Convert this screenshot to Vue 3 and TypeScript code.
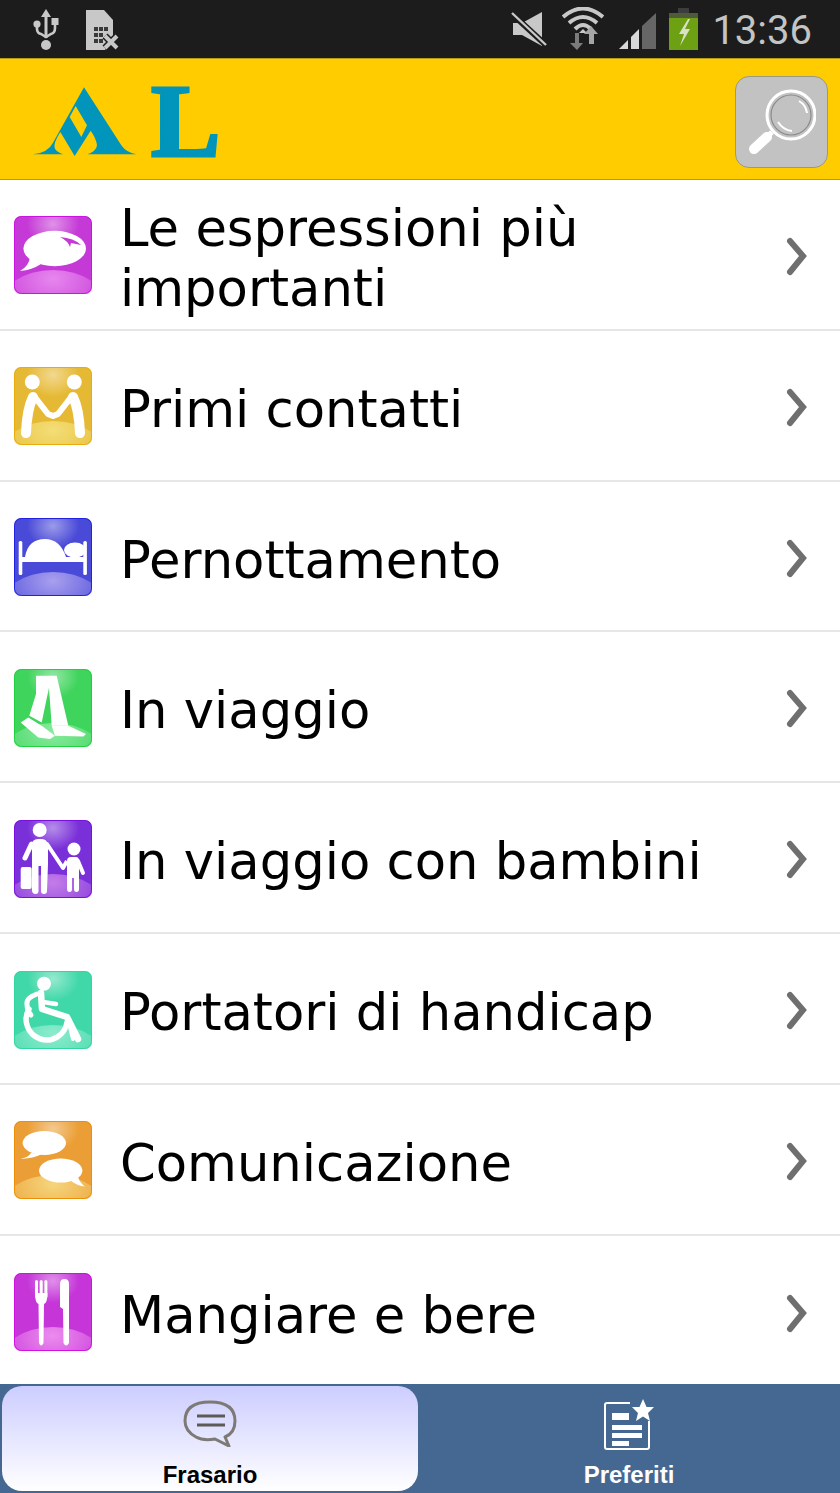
<script setup lang="ts">
interface Topic {
  label: string
  glyph: string
  base: string
  edge: string
  dome: string
}

const topics: Topic[] = [
  { label: 'Le espressioni più importanti', glyph: 'bubble', base: '#c53ad6', edge: '#cc14e2', dome: '#e98af0' },
  { label: 'Primi contatti', glyph: 'hands', base: '#e6b935', edge: '#e8ad0c', dome: '#f4e07a' },
  { label: 'Pernottamento', glyph: 'bed', base: '#4a4ad8', edge: '#2222e0', dome: '#aea4f0' },
  { label: 'In viaggio', glyph: 'legs', base: '#3fd45c', edge: '#20d040', dome: '#8cecA2' },
  { label: 'In viaggio con bambini', glyph: 'family', base: '#7a30d8', edge: '#7a10e0', dome: '#c880ea' },
  { label: 'Portatori di handicap', glyph: 'wheel', base: '#40d8a8', edge: '#30d8a0', dome: '#90ecd0' },
  { label: 'Comunicazione', glyph: 'talk', base: '#eb9e35', edge: '#eb8e08', dome: '#f6d880' },
  { label: 'Mangiare e bere', glyph: 'food', base: '#c535d8', edge: '#d010e0', dome: '#ee90f0' },
]
</script>

<template>
  <div class="phone">
    <div class="status">
      <svg class="st-usb" width="26" height="42" viewBox="0 0 26 42">
        <path d="M13 0l5 8h-3.5v21h-3V8H8z" fill="#c8c8c8" />
        <circle cx="13" cy="36" r="5" fill="#c8c8c8" />
        <path d="M4 14v6q0 4 4 5l5 3 5-3q4-1 4-6v-5" fill="none" stroke="#c8c8c8" stroke-width="2.6" />
        <circle cx="4" cy="15" r="3.6" fill="#c8c8c8" />
        <rect x="18.500" y="9" width="7" height="7" fill="#c8c8c8" />
      </svg>
      <svg class="st-sim" width="34" height="42" viewBox="0 0 34 42">
        <path d="M0 0h18l9 10v17l-8 13H0z" fill="#c8c8c8" />
        <g fill="#3a3a3a">
          <rect x="8" y="17" width="4" height="4" /><rect x="13" y="17" width="4" height="4" /><rect x="18" y="17" width="4" height="4" />
          <rect x="8" y="23" width="4" height="4" /><rect x="13" y="23" width="4" height="4" />
          <rect x="8" y="29" width="4" height="4" /><rect x="13" y="29" width="4" height="4" />
        </g>
        <path d="M19 26l12 12M31 26L19 38" stroke="#1c1c1c" stroke-width="7" />
        <path d="M19 26l12 12M31 26L19 38" stroke="#c8c8c8" stroke-width="4" />
      </svg>
      <div class="st-space"></div>
      <svg class="st-mute" width="36" height="36" viewBox="0 0 36 36">
        <path d="M2 11h9L31 0v34L11 23H2z" fill="#c8c8c8" />
        <path d="M0 1l36 33" stroke="#1c1c1c" stroke-width="6" />
        <path d="M1 1l34 32" stroke="#c8c8c8" stroke-width="2.4" />
      </svg>
      <svg class="st-wifi" width="42" height="44" viewBox="0 0 42 44">
        <path d="M1 10Q21-7 41 10M7 16Q21 4 35 16M13 22Q21 14 29 22" fill="none" stroke="#c8c8c8" stroke-width="4" />
        <path d="M17 26l4-4 4 4z" fill="#c8c8c8" />
        <path d="M13 26v10h-5l7 7 6-7h-4V26z" fill="#7b7b7b" />
        <path d="M29 19l7 8h-4v10h-5V27h-5z" fill="#a5a5a5" />
      </svg>
      <svg class="st-signal" width="38" height="37" viewBox="0 0 38 37">
        <path d="M0 36L9 27v9z" fill="#d8d8d8" />
        <path d="M12 24l8-8v20h-8z" fill="#d8d8d8" />
        <path d="M23 13L37 0v36H23z" fill="#666" />
      </svg>
      <svg class="st-battery" width="29" height="42" viewBox="0 0 29 42">
        <rect x="9" y="0" width="11" height="6" fill="#3d3d3d" />
        <rect x="0" y="5" width="29" height="37" fill="#6ea014" />
        <rect x="0" y="5" width="29" height="5" fill="#4f5a3a" />
        <path d="M19 11l-9 15h5l-4 12 10-17h-5l5-10z" fill="#d8e0c8" />
      </svg>
      <span class="clock">13:36</span>
    </div>

    <header class="topbar">
      <div class="logo">
        <svg width="115" height="78" viewBox="0 0 345 234">
          <path fill="#0295bb" d="M168 16L280 190Q295 212 325 217L178 217Q205 208 207 190Q205 170 188 146L140 222L97 150Q75 185 80 198Q85 210 105 217L15 217Q60 212 75 182z" />
          <path fill="#ffcc00" d="M143 72L177 130L160 165L125 105z" />
        </svg>
        <span class="logo-l">L</span>
      </div>
      <button class="search">
        <svg width="70" height="72" viewBox="0 0 70 72">
          <circle cx="45" cy="29" r="24" fill="none" stroke="#fff" stroke-width="3" />
          <circle cx="45" cy="29" r="20" fill="none" stroke="#8a8a8a" stroke-width="1.200" />
          <path d="M53 15q7 4 8 12" fill="none" stroke="#fff" stroke-width="2" />
          <path d="M32 36q5 8 14 9" fill="none" stroke="#fff" stroke-width="2" />
          <path d="M26 46L22 50" stroke="#fff" stroke-width="5" />
          <path d="M21 51L8 63" stroke="#fff" stroke-width="10" stroke-linecap="round" />
        </svg>
      </button>
    </header>

    <ul class="topics">
      <li v-for="(t, i) in topics" :key="t.label" class="topic">
        <svg class="tile" width="78" height="78" viewBox="0 0 78 78">
          <defs>
            <clipPath :id="`tile-${i}`"><rect width="78" height="78" rx="7" /></clipPath>
            <radialGradient :id="`glow-${i}`">
              <stop offset="0" stop-color="#fff" stop-opacity=".45" />
              <stop offset="1" stop-color="#fff" stop-opacity="0" />
            </radialGradient>
            <radialGradient :id="`dome-${i}`" cx=".5" cy=".12" r=".55">
              <stop offset="0" :stop-color="t.dome" stop-opacity=".95" />
              <stop offset="1" :stop-color="t.dome" stop-opacity=".1" />
            </radialGradient>
          </defs>
          <g :clip-path="`url(#tile-${i})`">
            <rect width="78" height="78" :fill="t.base" />
            <ellipse cx="39" cy="8" rx="26" ry="22" :fill="`url(#glow-${i})`" />
            <ellipse cx="39" cy="91" rx="54" ry="37" :fill="`url(#dome-${i})`" />
            <rect x=".5" y=".5" width="77" height="77" rx="7" fill="none" :stroke="t.edge" />
          </g>

          <g v-if="t.glyph === 'bubble'" fill="#fff">
            <ellipse cx="40.700" cy="32.500" rx="31.300" ry="17.700" />
            <path d="M16 41Q15 50 6 55Q18 54 27 48z" />
            <path :fill="t.base" d="M46 21Q60 22 67 29L57 27L56 31Q54 25 46 21z" />
          </g>
          <g v-else-if="t.glyph === 'hands'" fill="none" stroke="#fff" stroke-linecap="round" stroke-linejoin="round">
            <circle cx="18.300" cy="15" r="7.500" fill="#fff" stroke="none" />
            <circle cx="60.300" cy="15" r="7.500" fill="#fff" stroke="none" />
            <path d="M12 66Q13 42 19 30" stroke-width="10" />
            <path d="M66 66Q65 42 59 30" stroke-width="10" />
            <path d="M20 29L34 47L39 49L44 47L58 29" stroke-width="6" />
          </g>
          <g v-else-if="t.glyph === 'bed'" fill="#fff">
            <rect x="4.700" y="23" width="3.600" height="34" rx="1.500" />
            <rect x="69.300" y="23" width="3.600" height="34" rx="1.500" />
            <path d="M8 39H70V44H8z" />
            <path d="M11 39Q14 21 31 21Q46 21 52 39z" />
            <ellipse cx="61" cy="32" rx="11" ry="7.500" />
          </g>
          <g v-else-if="t.glyph === 'legs'" fill="#fff">
            <path d="M22 6.700H42.700L54.300 56.700H37.700L35 18.400L27.700 53.400L15.300 46.700L22 25z" />
            <path d="M6.700 53.400L14.300 48.400L27.700 56.700L41 66.700L36 70L24.300 68.400L14.300 60z" />
            <path d="M37.700 56.700H54.300L72 65L69.300 67.400L41 66.700z" />
          </g>
          <g v-else-if="t.glyph === 'family'" fill="#fff">
            <circle cx="25.700" cy="10" r="7" />
            <path d="M18 25Q18 19 24 19H28Q33 19 34 25V44L33 71Q33 74 30 74T27 71V46H24.500V71Q24.500 74 21.500 74T18 71z" />
            <path d="M17.500 24L11 38" stroke="#fff" stroke-width="5" stroke-linecap="round" />
            <path d="M33 24L49 48" stroke="#fff" stroke-width="4" stroke-linecap="round" />
            <rect x="6.700" y="47" width="11" height="22" rx="2" />
            <circle cx="60" cy="29" r="6.500" />
            <path d="M53 41Q53 37 57 37H62Q65 37 65 41V69Q65 72 62.500 72T60 69V58H58V69Q58 72 55.500 72T53 69z" />
            <path d="M53 41L49 48" stroke="#fff" stroke-width="4" />
            <path d="M64 41L69 53" stroke="#fff" stroke-width="4" stroke-linecap="round" />
          </g>
          <g v-else-if="t.glyph === 'wheel'" fill="none" stroke="#fff" stroke-linecap="round" stroke-linejoin="round">
            <circle cx="30" cy="12.700" r="7" fill="#fff" stroke="none" />
            <path d="M15 38A20.500 20.500 0 1 0 53 51" stroke-width="5.500" />
            <path d="M27 22L28 38L53 46L64 68" stroke-width="6.500" />
            <path d="M54 48L59 68" stroke-width="4" />
            <path d="M23 23Q12 27 13 33Q13 40 17 44" stroke-width="5" />
            <path d="M29 31L42 33" stroke-width="4.500" />
          </g>
          <g v-else-if="t.glyph === 'talk'" fill="#fff">
            <ellipse cx="30.300" cy="22" rx="21.700" ry="12" />
            <path d="M17 32Q15 36 7 37.600Q18 38 28 33z" />
            <ellipse cx="46.700" cy="49.600" rx="21.700" ry="12" />
            <path d="M57 60Q64 65 71 65.600Q66 62 64 56z" />
          </g>
          <g v-else fill="#fff">
            <rect x="21" y="7" width="3" height="18" rx="1.500" />
            <rect x="25.700" y="7" width="3" height="18" rx="1.500" />
            <rect x="30.400" y="7" width="3" height="18" rx="1.500" />
            <path d="M21 20Q21 30 24.500 31L25 70Q27 75 29.500 70L30 31Q33.500 30 33.400 20z" />
            <path d="M46 34V11Q46 6 50.500 6Q55 6 55 11V70Q52 75 49.500 70L49 36z" />
          </g>
        </svg>
        <span class="topic-label">{{ t.label }}</span>
        <svg class="chevron" width="24" height="40" viewBox="0 0 24 40">
          <path d="M4 4L17 19L4 35" fill="none" stroke="#6f6f6f" stroke-width="6" stroke-linecap="round" />
        </svg>
      </li>
    </ul>

    <nav class="tabs">
      <div class="tab active">
        <svg width="54" height="48" viewBox="0 0 54 48">
          <path d="M13 38Q2 32 2 22Q2 3 27 3Q52 3 52 22Q52 34 42 38L46 47L32 40Q20 42 13 38z" fill="none" stroke="#7d7a75" stroke-width="3" stroke-linejoin="round" />
          <path d="M14 17H42M14 26H42" stroke="#5c5a56" stroke-width="3" />
        </svg>
        <span>Frasario</span>
      </div>
      <div class="tab">
        <svg width="52" height="52" viewBox="0 0 52 52">
          <path d="M27 4H4Q2 4 2 6V48Q2 50 4 50H44Q46 50 46 48V22" fill="none" stroke="#fff" stroke-width="2" />
          <path d="M40 0L43.500 8H51L45 14L47 22L40 17.500L33 22L35 14L29 8H36.500z" fill="#fff" />
          <path d="M9 14H26V21H9zM9 26H39V31H9zM9 34H39V39H9zM9 42H26V47H9z" fill="#fff" />
        </svg>
        <span>Preferiti</span>
      </div>
    </nav>
  </div>
</template>

<style scoped>
.phone {
  width: 840px;
  height: 1493px;
  display: flex;
  flex-direction: column;
  overflow: hidden;
  background: #fff;
  font-family: 'DejaVu Sans', sans-serif;
}

.status {
  height: 58px;
  flex: none;
  display: flex;
  align-items: flex-start;
  background: #1c1c1c;
}
.status svg { filter: blur(0.5px); }
.st-usb { margin: 9px 0 0 33px; }
.st-sim { margin: 10px 0 0 27px; }
.st-space { flex: 1; }
.st-mute { margin: 12px 0 0 0; }
.st-wifi { margin: 7px 0 0 15px; }
.st-signal { margin: 13px 0 0 15px; }
.st-battery { margin: 8px 0 0 12px; }
.clock {
  margin: 7px 28px 0 14px;
  font-family: Roboto, sans-serif;
  font-weight: 400;
  font-size: 40px;
  line-height: 47px;
  color: #c4c4c4;
}

.topbar {
  height: 122px;
  flex: none;
  box-sizing: border-box;
  display: flex;
  align-items: flex-start;
  justify-content: space-between;
  padding: 17px 12px 0 28px;
  background: #ffcc00;
  border-top: 1px solid #b89a10;
  border-bottom: 1px solid #b39a30;
}
.logo {
  display: flex;
  align-items: flex-start;
  gap: 8px;
  margin-top: 6px;
}
.logo-l {
  margin-top: 3px;
  font-family: 'Liberation Serif', serif;
  font-weight: 700;
  font-size: 104px;
  line-height: 71px;
  color: #0295bb;
  -webkit-text-stroke: 3px #0295bb;
}
.search {
  width: 93px;
  height: 92px;
  box-sizing: border-box;
  padding: 0 0 0 10px;
  display: flex;
  align-items: center;
  background: #c2c2c2;
  border: 1px solid #9a9a80;
  border-radius: 14px;
}
.search svg { filter: blur(0.4px); }

.topics {
  list-style: none;
  margin: 0;
  padding: 0;
  flex: 1;
  min-height: 0;
  overflow: hidden;
}
.topic {
  height: 150.83px;
  box-sizing: border-box;
  display: flex;
  align-items: center;
  padding: 2px 30px 0 14px;
  border-bottom: 2px solid #e6e6e6;
}
.topic:last-child { border-bottom: none; }
.tile { flex: none; filter: blur(0.5px); }
.topic-label {
  flex: 1;
  margin: 5px 0 0 25px;
  padding-left: 3px;
  font-size: 51.2px;
  line-height: 60px;
  color: #000;
}
.chevron { flex: none; margin-top: 3px; filter: blur(0.4px); }

.tabs {
  height: 109px;
  flex: none;
  box-sizing: border-box;
  display: flex;
  padding: 2px 0 2px 2px;
  background: #456892;
}
.tab {
  flex: 1;
  display: flex;
  flex-direction: column;
  align-items: center;
  padding-top: 13px;
  font-family: 'Liberation Sans', sans-serif;
  font-weight: 700;
  font-size: 24px;
  line-height: 28px;
  color: #fff;
}
.tab span { margin-top: 14px; }
.tab:not(.active) span { margin-top: 10px; }
.tab.active {
  flex: 0 0 416px;
  color: #000;
  background: linear-gradient(#cccdff, #fff);
  border-radius: 20px;
}
</style>
